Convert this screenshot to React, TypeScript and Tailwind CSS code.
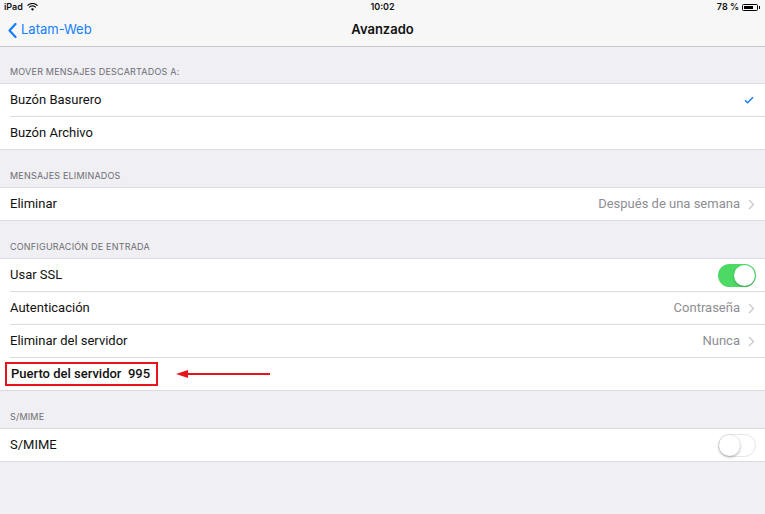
import React from "react";

const Chevron = () => (
  <svg width="7" height="11" viewBox="0 0 7 11" className="ml-[8px]">
    <path d="M1 1l4.5 4.5L1 10" fill="none" stroke="#c7c7cc" strokeWidth="1.3" />
  </svg>
);

const Row = ({ children, last }: { children: React.ReactNode; last?: boolean }) => (
  <div className="pl-[10px]">
    <div className={`flex items-center pr-[10px] ${last ? "h-[32px]" : "h-[33px] border-b border-[#dcdce0]"}`}>{children}</div>
  </div>
);

const Header = ({ text, first }: { text: string; first?: boolean }) => (
  <div
    className={`${first ? "h-[37px]" : "h-[38px]"} flex items-end pb-[5px] px-[10px] text-[9px] text-[#6d6d72] tracking-[0.2px] border-b border-[#dcdce0]`}
    style={{ fontFamily: "Inter, 'Liberation Sans', sans-serif" }}
  >
    {text}
  </div>
);

const Toggle = ({ on }: { on: boolean }) =>
  on ? (
    <div className="w-[38px] h-[23px] rounded-full bg-[#4cd964] relative mr-[-1px]">
      <div className="absolute right-[1px] top-[1px] w-[21px] h-[21px] rounded-full bg-white shadow-[0_1px_2px_rgba(0,0,0,0.3)]" />
    </div>
  ) : (
    <div className="w-[38px] h-[23px] rounded-full bg-white border border-[#e5e5ea] relative mr-[-1px]">
      <div className="absolute left-[0px] top-[0px] w-[21px] h-[21px] rounded-full bg-white shadow-[0_1px_3px_rgba(0,0,0,0.35)]" />
    </div>
  );

export default function App() {
  return (
    <div
      className="w-[765px] h-[514px] bg-[#efeff4] text-[#111] overflow-hidden"
      style={{ fontFamily: "Roboto, 'Liberation Sans', sans-serif" }}
    >
      <div className="bg-[#f7f7f8] border-b border-[#c8c7cc]" style={{ fontFamily: "Inter, 'Liberation Sans', sans-serif" }}>
        <div className="h-[14px] relative flex items-center px-[4px] text-[9px] font-semibold">
          <span>iPad</span>
          <svg width="11" height="8" viewBox="0 0 11 8" className="ml-[4px]">
            <path d="M0.5 2.6A7 7 0 0 1 10.5 2.6" fill="none" stroke="#000" strokeWidth="1.2" />
            <path d="M2.2 4.3A4.6 4.6 0 0 1 8.8 4.3" fill="none" stroke="#000" strokeWidth="1.2" />
            <path d="M5.5 7.8L3.9 6A2.3 2.3 0 0 1 7.1 6Z" fill="#000" />
          </svg>
          <span className="absolute left-1/2 -translate-x-1/2">10:02</span>
          <span className="ml-auto">78 %</span>
          <div className="ml-[3px] w-[16px] h-[7px] border border-black rounded-[1.5px] p-[1px] flex">
            <div className="w-[78%] bg-black" />
          </div>
          <div className="w-[1.5px] h-[3px] bg-black ml-[0.5px] mr-[1px]" />
        </div>
        <div className="h-[32px] relative flex items-center px-[8px]">
          <svg width="9" height="15" viewBox="0 0 9 15">
            <path d="M7.5 1L1.5 7.5L7.5 14" fill="none" stroke="#147efb" strokeWidth="2.2" strokeLinecap="round" strokeLinejoin="round" />
          </svg>
          <span className="ml-[4px] text-[13px] text-[#147efb]">Latam-Web</span>
          <span className="absolute left-1/2 -translate-x-1/2 text-[13px] font-semibold">Avanzado</span>
        </div>
      </div>

      <Header first text="MOVER MENSAJES DESCARTADOS A:" />
      <div className="bg-white border-b border-[#dcdce0] text-[13px]">
        <Row>
          <span>Buzón Basurero</span>
          <svg width="10" height="8" viewBox="0 0 10 8" className="ml-auto mr-[1px]">
            <path d="M1 4.2l2.6 2.6L9 1.2" fill="none" stroke="#147efb" strokeWidth="1.4" />
          </svg>
        </Row>
        <Row last>
          <span>Buzón Archivo</span>
        </Row>
      </div>

      <Header text="MENSAJES ELIMINADOS" />
      <div className="bg-white border-b border-[#dcdce0] text-[13px]">
        <Row last>
          <span>Eliminar</span>
          <span className="ml-auto text-[#8e8e93]">Después de una semana</span>
          <Chevron />
        </Row>
      </div>

      <Header text="CONFIGURACIÓN DE ENTRADA" />
      <div className="bg-white border-b border-[#dcdce0] text-[13px]">
        <Row>
          <span>Usar SSL</span>
          <div className="ml-auto">
            <Toggle on />
          </div>
        </Row>
        <Row>
          <span>Autenticación</span>
          <span className="ml-auto text-[#8e8e93]">Contraseña</span>
          <Chevron />
        </Row>
        <Row>
          <span>Eliminar del servidor</span>
          <span className="ml-auto text-[#8e8e93]">Nunca</span>
          <Chevron />
        </Row>
        <div className="h-[32px] flex items-center pl-[5px]">
          <div className="h-[24px] w-[153px] border-2 border-[#e8141b] flex items-center pl-[4px] font-medium">
            Puerto del servidor&nbsp;&nbsp;995
          </div>
          <svg width="96" height="10" viewBox="0 0 96 10" className="ml-[18px]">
            <path d="M10 5H94" stroke="#e8141b" strokeWidth="2" />
            <path d="M0 5L12 1V9Z" fill="#e8141b" />
          </svg>
        </div>
      </div>

      <Header text="S/MIME" />
      <div className="bg-white border-b border-[#dcdce0] text-[13px]">
        <Row last>
          <span>S/MIME</span>
          <div className="ml-auto">
            <Toggle on={false} />
          </div>
        </Row>
      </div>
    </div>
  );
}
